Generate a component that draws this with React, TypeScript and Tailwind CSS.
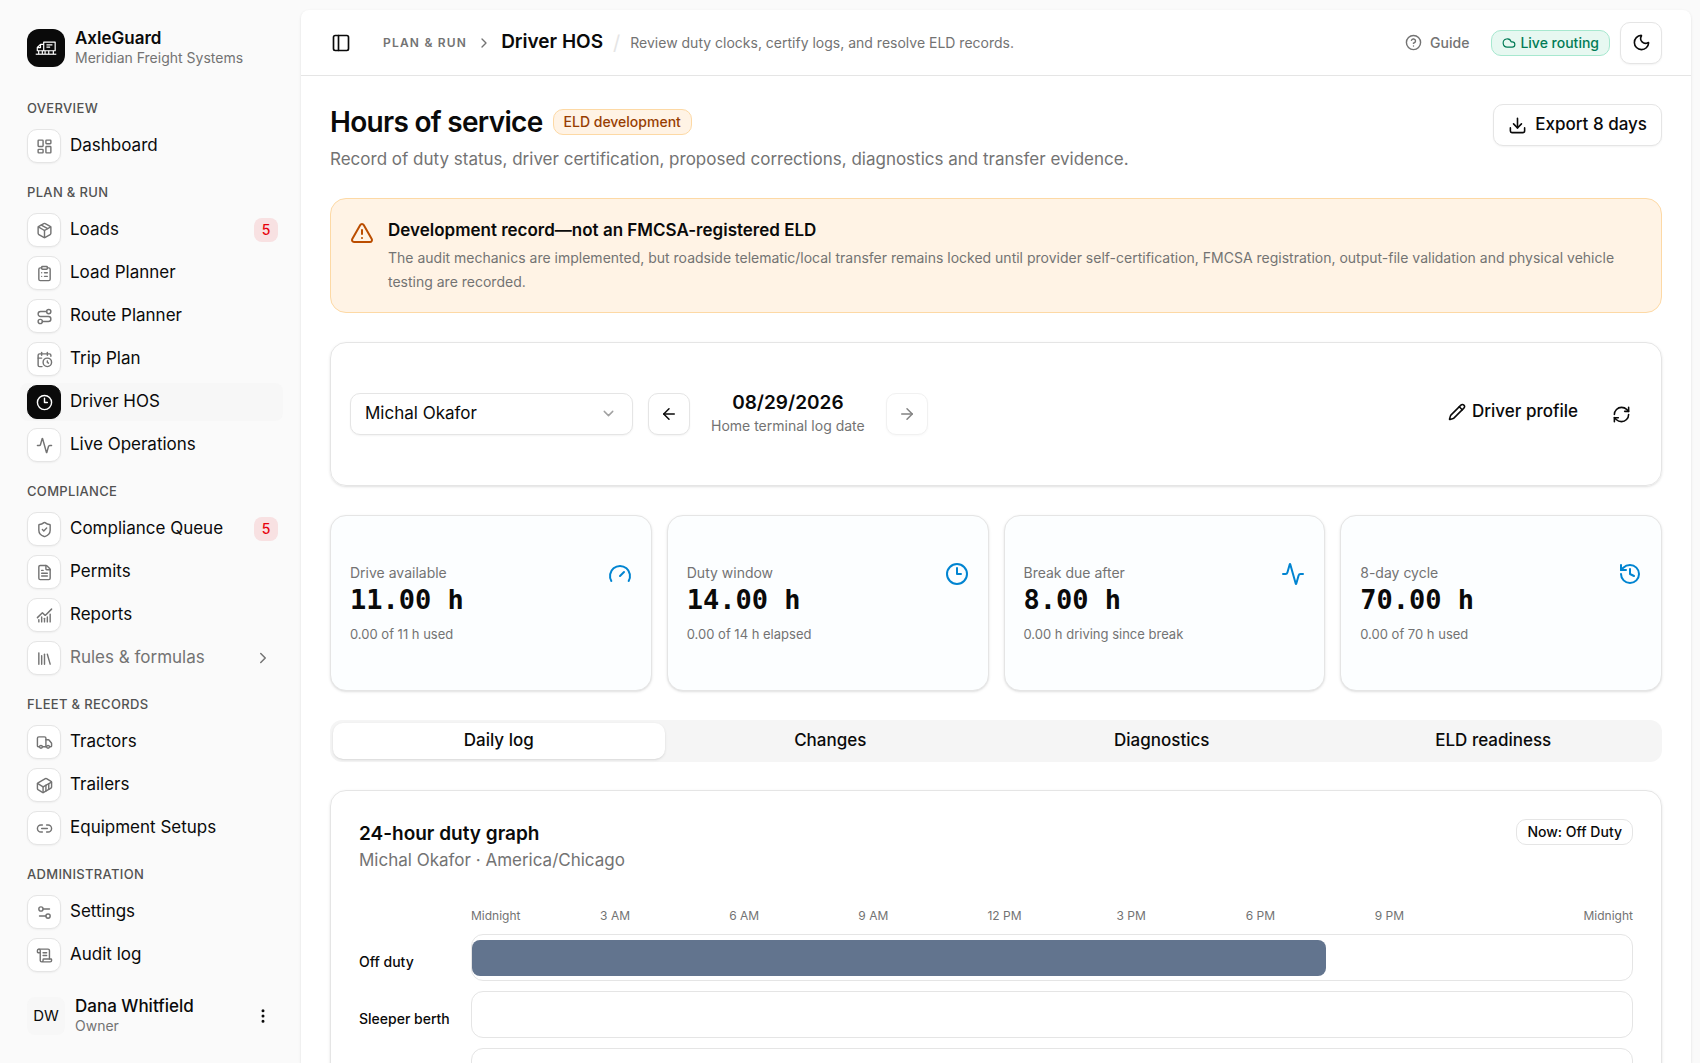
import { useState } from "react";
import type { ReactNode } from "react";
import {
  Activity, ArrowLeft, ArrowRight, CalendarClock, ChartNoAxesCombined, ChevronDown, ChevronRight,
  CircleQuestionMark, ClipboardList, Clock3, Cloud, Container, Download, EllipsisVertical, FileText,
  Gauge, History, LayoutDashboard, Library, Link2, Moon, Package, PanelLeft, Pencil, RefreshCw,
  Route, ScrollText, Settings2, ShieldCheck, TriangleAlert, Truck,
} from "lucide-react";
import type { LucideIcon } from "lucide-react";
import clsx from "clsx";

type NavItem = { label: string; icon: LucideIcon; badge?: number; expandable?: boolean };
type NavGroup = { title: string; items: NavItem[] };

const NAV: NavGroup[] = [
  { title: "Overview", items: [{ label: "Dashboard", icon: LayoutDashboard }] },
  {
    title: "Plan & Run",
    items: [
      { label: "Loads", icon: Package, badge: 5 },
      { label: "Load Planner", icon: ClipboardList },
      { label: "Route Planner", icon: Route },
      { label: "Trip Plan", icon: CalendarClock },
      { label: "Driver HOS", icon: Clock3 },
      { label: "Live Operations", icon: Activity },
    ],
  },
  {
    title: "Compliance",
    items: [
      { label: "Compliance Queue", icon: ShieldCheck, badge: 5 },
      { label: "Permits", icon: FileText },
      { label: "Reports", icon: ChartNoAxesCombined },
      { label: "Rules & formulas", icon: Library, expandable: true },
    ],
  },
  {
    title: "Fleet & Records",
    items: [
      { label: "Tractors", icon: Truck },
      { label: "Trailers", icon: Container },
      { label: "Equipment Setups", icon: Link2 },
    ],
  },
  {
    title: "Administration",
    items: [
      { label: "Settings", icon: Settings2 },
      { label: "Audit log", icon: ScrollText },
    ],
  },
];

const CLOCKS: { label: string; value: string; note: string; icon: LucideIcon }[] = [
  { label: "Drive available", value: "11.00 h", note: "0.00 of 11 h used", icon: Gauge },
  { label: "Duty window", value: "14.00 h", note: "0.00 of 14 h elapsed", icon: Clock3 },
  { label: "Break due after", value: "8.00 h", note: "0.00 h driving since break", icon: Activity },
  { label: "8-day cycle", value: "70.00 h", note: "0.00 of 70 h used", icon: History },
];

const TABS = ["Daily log", "Changes", "Diagnostics", "ELD readiness"];
const HOURS = ["Midnight", "3 AM", "6 AM", "9 AM", "12 PM", "3 PM", "6 PM", "9 PM", "Midnight"];

// start/end are hours since midnight in the home terminal time zone
const DUTY_ROWS: { label: string; segments: { start: number; end: number }[] }[] = [
  { label: "Off duty", segments: [{ start: 0, end: 17.66 }] },
  { label: "Sleeper berth", segments: [] },
  { label: "Driving", segments: [] },
];

function Logo() {
  return (
    <span className="flex size-[38px] shrink-0 items-center justify-center rounded-xl bg-neutral-950 text-white">
      <svg viewBox="0 0 24 24" className="size-[22px]" fill="none" stroke="currentColor" strokeWidth="1.3" strokeLinejoin="round" aria-hidden="true">
        <path d="M9.5 5.5h12.5v9.5H9.5z" />
        <path d="M9.5 8H6L2.5 11.5V15h7" />
        <path d="M6 8v3.5H2.5" />
        <path d="M12.5 8.5h6.5M12.5 11h4" />
        <path d="M.8 18.8h22.4" />
        <path d="M4 15v3.5M8 15v3.5M11 15v3.5M15 15v3.5M20 15v3.5" />
      </svg>
    </span>
  );
}

function NavLink({ item }: { item: NavItem }) {
  const active = item.label === "Driver HOS";
  const Icon = item.icon;
  return (
    <li>
      <a
        href="#"
        aria-current={active ? "page" : undefined}
        className={clsx(
          "flex h-[38px] items-center gap-[9px] rounded-lg px-[7px] text-[17px]",
          active && "bg-neutral-100/70",
          item.expandable ? "text-neutral-500" : "text-neutral-950",
        )}>
        <span
          className={clsx(
            "flex size-[34px] shrink-0 items-center justify-center rounded-[10px] border shadow-xs",
            active ? "border-neutral-950 bg-neutral-950 text-white" : "border-neutral-200 bg-white text-neutral-500",
          )}>
          <Icon size={17} />
        </span>
        <span className="flex-1 truncate">{item.label}</span>
        {item.badge && (
          <span className="-mr-0.5 flex size-6 items-center justify-center rounded-lg bg-red-600/10 text-sm font-medium text-red-600">
            {item.badge}
          </span>
        )}
        {item.expandable && <ChevronRight size={18} className="mr-1" />}
      </a>
    </li>
  );
}

function Sidebar() {
  return (
    <aside className="flex w-[301px] shrink-0 flex-col pr-[18px] pl-5">
      <div className="flex items-center gap-2.5 px-[7px] pt-7">
        <Logo />
        <div className="leading-5">
          <div className="text-[17px] font-semibold">AxleGuard</div>
          <div className="text-sm leading-5 text-neutral-500">Meridian Freight Systems</div>
        </div>
      </div>
      <nav className="mt-[23px] flex flex-1 flex-col gap-2.5">
        {NAV.map((group) => (
          <section key={group.title}>
            <h2 className="flex h-9 items-center px-[7px] text-[13px] font-medium uppercase tracking-wide text-neutral-600">
              {group.title}
            </h2>
            <ul className="space-y-[5px]">
              {group.items.map((item) => (
                <NavLink key={item.label} item={item} />
              ))}
            </ul>
          </section>
        ))}
      </nav>
      <div className="flex items-center gap-2.5 px-[7px] pb-[27px]">
        <span className="flex size-[38px] shrink-0 items-center justify-center rounded-lg bg-neutral-100/70 text-[15px]">DW</span>
        <div className="flex-1 leading-5">
          <div className="text-[17px] font-medium">Dana Whitfield</div>
          <div className="text-sm leading-5 text-neutral-500">Owner</div>
        </div>
        <button type="button" aria-label="Account menu" className="mr-1">
          <EllipsisVertical size={18} />
        </button>
      </div>
    </aside>
  );
}

function IconButton({ label, disabled, children }: { label: string; disabled?: boolean; children: ReactNode }) {
  return (
    <button
      type="button"
      aria-label={label}
      disabled={disabled}
      className="flex size-[42px] shrink-0 items-center justify-center rounded-[10px] border border-neutral-200 bg-white shadow-xs disabled:opacity-50">
      {children}
    </button>
  );
}

function Header() {
  return (
    <header className="flex h-[66px] shrink-0 items-center border-b border-neutral-200 px-[29px]">
      <button type="button" aria-label="Toggle sidebar" className="mr-8 flex w-[21px] justify-center">
        <PanelLeft size={20} />
      </button>
      <span className="text-xs font-semibold uppercase tracking-widest text-neutral-500">Plan &amp; Run</span>
      <ChevronRight size={16} className="mx-[9px] text-neutral-500" />
      <h2 className="text-[19px] font-semibold">Driver HOS</h2>
      <span className="mx-2.5 text-xl text-neutral-200">/</span>
      <p className="flex-1 truncate text-sm text-neutral-500">Review duty clocks, certify logs, and resolve ELD records.</p>
      <a href="#" className="mr-[22px] flex items-center gap-2 text-sm font-medium text-neutral-500">
        <CircleQuestionMark size={17} />
        Guide
      </a>
      <span className="mr-2.5 flex h-[26px] items-center gap-1 rounded-[10px] border border-[#a7e8cf] bg-[#e7f8f1] px-2.5 text-sm font-medium text-emerald-700">
        <Cloud size={14} />
        Live routing
      </span>
      <IconButton label="Switch to dark theme">
        <Moon size={19} />
      </IconButton>
    </header>
  );
}

function Toolbar() {
  return (
    <section className="mt-[29px] flex items-center rounded-2xl border border-neutral-200 px-[19px] py-12 shadow-sm">
      <div className="relative w-[283px]">
        <select
          aria-label="Driver"
          defaultValue="Michal Okafor"
          className="h-[42px] w-full appearance-none rounded-[10px] border border-neutral-200 bg-white px-3.5 text-[17px] shadow-xs">
          <option>Michal Okafor</option>
        </select>
        <ChevronDown size={17} className="pointer-events-none absolute right-4 top-3 text-neutral-400" />
      </div>
      <div className="ml-[15px] flex flex-1 items-center gap-[21px]">
        <IconButton label="Previous day">
          <ArrowLeft size={18} />
        </IconButton>
        <div className="text-center">
          <div className="text-[19px] leading-6 font-semibold">08/29/2026</div>
          <div className="text-sm leading-[22px] text-neutral-500">Home terminal log date</div>
        </div>
        <IconButton label="Next day" disabled>
          <ArrowRight size={18} />
        </IconButton>
      </div>
      <div className="flex items-start gap-2">
        <button type="button" className="flex h-[38px] items-center gap-1.5 px-3.5 text-[17px] font-medium">
          <Pencil size={18} />
          Driver profile
        </button>
        <button type="button" aria-label="Refresh" className="flex size-[42px] items-center justify-center">
          <RefreshCw size={19} />
        </button>
      </div>
    </section>
  );
}

function DutyGraph() {
  return (
    <section className="mt-7 rounded-2xl border border-neutral-200 p-7 shadow-sm">
      <div className="flex items-start justify-between">
        <div>
          <h2 className="text-[19px] leading-[30px] font-semibold">24-hour duty graph</h2>
          <p className="text-[17px] leading-[22px] text-neutral-500">Michal Okafor · America/Chicago</p>
        </div>
        <span className="flex h-[26px] items-center rounded-[10px] border border-neutral-200 px-2.5 text-sm font-medium">
          Now: Off Duty
        </span>
      </div>
      <div className="mt-[37px] grid grid-cols-[102px_1fr] gap-2.5">
        <div />
        <div className="grid grid-cols-9 text-xs text-neutral-500">
          {HOURS.map((hour, i) => (
            <span key={i} className="last:text-right">{hour}</span>
          ))}
        </div>
        {DUTY_ROWS.map((row) => (
          <div key={row.label} className="contents">
            <div className="flex items-center pt-2 text-sm font-medium">{row.label}</div>
            <div className="flex h-[47px] items-center rounded-xl border border-neutral-200">
              {row.segments.map((s) => (
                <div
                  key={s.start}
                  className="h-9 rounded-lg bg-slate-500"
                  style={{ width: `${((s.end - s.start) / 24) * 100}%` }}
                />
              ))}
            </div>
          </div>
        ))}
      </div>
    </section>
  );
}

export default function App() {
  const [tab, setTab] = useState(TABS[0]);

  return (
    <div className="flex h-screen overflow-hidden bg-neutral-50 font-['Inter',sans-serif] text-neutral-950">
      <Sidebar />
      <main className="mt-2.5 mr-[9px] flex min-w-0 flex-1 flex-col rounded-t-lg bg-white shadow-sm">
        <Header />
        <div className="flex-1 overflow-y-auto px-[29px] pt-7 pb-7 [scrollbar-width:none]">
          <div className="flex items-start justify-between">
            <div>
              <div className="flex items-center gap-2.5">
                <h1 className="text-[28px] leading-9 font-semibold tracking-tight">Hours of service</h1>
                <span className="flex h-[26px] items-center rounded-[10px] border border-[#fdd9a5] bg-[#fff3e5] px-2.5 text-sm font-medium text-amber-800">
                  ELD development
                </span>
              </div>
              <p className="mt-1.5 text-[17px] leading-[26px] text-neutral-500">
                Record of duty status, driver certification, proposed corrections, diagnostics and transfer evidence.
              </p>
            </div>
            <button
              type="button"
              className="flex h-[42px] items-center gap-2 rounded-[10px] border border-neutral-200 bg-white px-3.5 text-[17px] font-medium shadow-xs">
              <Download size={19} />
              Export 8 days
            </button>
          </div>

          <div role="alert" className="mt-[26px] flex gap-3.5 rounded-2xl border border-[#fdd9a5] bg-[#fff3e5] px-[19px] py-[18px]">
            <TriangleAlert size={24} className="mt-1 shrink-0 text-amber-700" />
            <div>
              <h2 className="text-[17px] leading-[26px] font-semibold">Development record—not an FMCSA-registered ELD</h2>
              <p className="mt-[3px] text-sm leading-6 text-neutral-500">
                The audit mechanics are implemented, but roadside telematic/local transfer remains locked until provider
                self-certification, FMCSA registration, output-file validation and physical vehicle testing are recorded.
              </p>
            </div>
          </div>

          <Toolbar />

          <section className="mt-[29px] grid grid-cols-4 gap-[15px]">
            {CLOCKS.map(({ label, value, note, icon: Icon }) => (
              <div key={label} className="flex justify-between rounded-2xl border border-neutral-200 bg-[#fcfeff] px-[19px] py-[46px] shadow-sm">
                <div>
                  <div className="text-sm leading-[22px] text-neutral-500">{label}</div>
                  <div className="font-['DejaVu_Sans_Mono',monospace] text-[27px] leading-8 font-bold">{value}</div>
                  <div className="mt-2 text-[13px] leading-5 text-neutral-500">{note}</div>
                </div>
                <Icon size={24} className="text-sky-600" />
              </div>
            ))}
          </section>

          <div role="tablist" className="mt-[29px] grid h-[42px] grid-cols-4 rounded-xl bg-neutral-100 p-[3px]">
            {TABS.map((name) => (
              <button
                key={name}
                type="button"
                role="tab"
                aria-selected={tab === name}
                onClick={() => setTab(name)}
                className={clsx("rounded-[10px] text-[17px] font-medium", tab === name && "bg-white shadow-sm")}>
                {name}
              </button>
            ))}
          </div>

          <DutyGraph />
        </div>
      </main>
    </div>
  );
}
